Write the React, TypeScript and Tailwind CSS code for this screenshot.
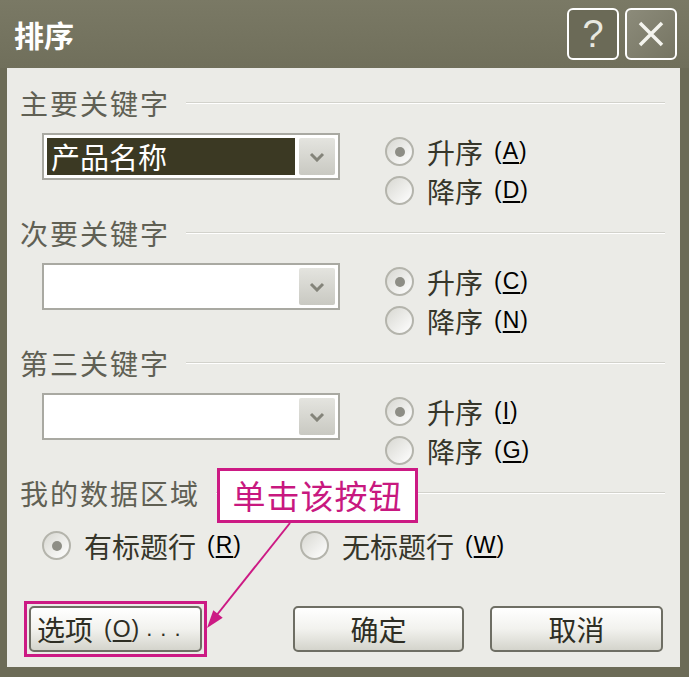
import React from 'react';

const FONT = "font-['Noto_Sans_CJK_SC','Noto_Sans',sans-serif]";

function Hotkey({ k }: { k: string }) {
  return (
    <span className="ml-[11px] font-['Liberation_Sans',sans-serif] text-[23px] tracking-[1px]">
      (<span className="underline underline-offset-[3px]">{k}</span>)
    </span>
  );
}

function Radio({ checked, label, k }: { checked?: boolean; label: string; k: string }) {
  return (
    <div className="flex h-[39px] items-center">
      <div className="flex h-[29px] w-[29px] items-center justify-center rounded-full border-2 border-[#b4b4ac] bg-gradient-to-br from-[#d8d8d2] to-white">
        {checked && <div className="h-[10px] w-[10px] rounded-full bg-[#8e8e86]" />}
      </div>
      <span className="ml-[13px] text-[28px] leading-none text-[#36362a]">{label}</span>
      <Hotkey k={k} />
    </div>
  );
}

function GroupLabel({ text }: { text: string }) {
  return (
    <div className="flex h-[30px] items-center gap-[16px] pr-[15px]">
      <span className="text-[28px] leading-none tracking-[2px] text-[#606054]">{text}</span>
      <div className="h-[2px] flex-1 border-t border-[#d2d2cc] border-b border-b-white" />
    </div>
  );
}

function Combo({ value }: { value?: string }) {
  return (
    <div className="mt-[1px] flex h-[47px] w-[298px] border-2 border-[#a9a9a2] bg-white p-[3px]">
      <div
        className={
          value
            ? 'flex flex-1 items-center bg-[#3b3923] pl-[4px] text-[29px] leading-none text-white'
            : 'flex-1'
        }
      >
        {value}
      </div>
      <div className="ml-[4px] flex w-[36px] items-center justify-center rounded-[2px] bg-gradient-to-b from-[#e4e4df] to-[#c9c9c2]">
        <svg width="16" height="10" viewBox="0 0 16 10">
          <path d="M2 2 L8 8 L14 2" fill="none" stroke="#84847a" strokeWidth="3" />
        </svg>
      </div>
    </div>
  );
}

function SortGroup({ label, value, keys }: { label: string; value?: string; keys: [string, string] }) {
  return (
    <div className="mb-[8px]">
      <GroupLabel text={label} />
      <div className="mt-[14px] flex">
        <div className="ml-[22px]">
          <Combo value={value} />
        </div>
        <div className="ml-[45px] flex flex-col">
          <Radio checked label="升序" k={keys[0]} />
          <Radio label="降序" k={keys[1]} />
        </div>
      </div>
    </div>
  );
}

function Btn({ children, className }: { children: React.ReactNode; className?: string }) {
  return (
    <div
      className={
        'flex h-[46px] items-center rounded-[5px] border-2 border-[#6e6e64] bg-gradient-to-b from-white via-[#f2f2ee] to-[#d4d4cc] text-[28px] leading-none text-[#2e2e24] ' +
        (className || '')
      }
    >
      {children}
    </div>
  );
}

export default function App() {
  return (
    <div className={`relative flex h-[677px] w-[689px] flex-col bg-[#6c6b57] ${FONT}`}>
      {/* title bar */}
      <div className="flex h-[68px] items-center bg-gradient-to-b from-[#7a7965] to-[#706f5b] pl-[14px] pr-[12px]">
        <span className="text-[30px] font-bold leading-none text-white">排序</span>
        <div className="ml-auto flex gap-[6px]">
          <div className="flex h-[52px] w-[52px] items-center justify-center rounded-[6px] border-2 border-white bg-[#6b6a57]">
            <span className="font-['Liberation_Sans',sans-serif] text-[38px] leading-none text-[#e8e8e0]">?</span>
          </div>
          <div className="flex h-[52px] w-[52px] items-center justify-center rounded-[6px] border-2 border-white bg-gradient-to-br from-[#8c8b7a] to-[#767563]">
            <svg width="30" height="30" viewBox="0 0 30 30">
              <path d="M4 4 L26 26 M26 4 L4 26" stroke="#f4f4ee" strokeWidth="3.5" />
            </svg>
          </div>
        </div>
      </div>

      {/* body */}
      <div className="mb-[10px] ml-[7px] mr-[9px] flex-1 bg-[#ebebe7] pl-[13px] pt-[20px]">
        <SortGroup label="主要关键字" value="产品名称" keys={['A', 'D']} />
        <SortGroup label="次要关键字" keys={['C', 'N']} />
        <SortGroup label="第三关键字" keys={['I', 'G']} />

        <GroupLabel text="我的数据区域" />
        <div className="ml-[22px] mt-[18px] flex">
          <div className="w-[258px]">
            <Radio checked label="有标题行" k="R" />
          </div>
          <Radio label="无标题行" k="W" />
        </div>

        <div className="ml-[4px] mt-[36px] flex items-start">
          <div className="border-[3px] border-[#cc1a84] p-[2px]">
            <Btn className="w-[173px] pl-[6px]">
              选项
              <Hotkey k="O" />
              <span className="ml-[6px] font-['Liberation_Sans',sans-serif] text-[22px] tracking-[8px]">...</span>
            </Btn>
          </div>
          <Btn className="ml-[86px] mt-[5px] w-[171px] justify-center">确定</Btn>
          <Btn className="ml-[26px] mt-[5px] w-[173px] justify-center">取消</Btn>
        </div>
      </div>

      {/* callout */}
      <div className="absolute left-[217px] top-[468px] flex h-[55px] w-[201px] items-center justify-center border-[3px] border-[#cc1a84] bg-white">
        <span className="text-[33px] leading-none tracking-[1px] text-[#c8187f]">单击该按钮</span>
      </div>
      <svg className="pointer-events-none absolute left-0 top-0" width="689" height="677">
        <line x1="290" y1="523" x2="216" y2="616" stroke="#cc1a84" strokeWidth="2" />
        <polygon points="207,628 222.7,617.7 213.3,610.3" fill="#cc1a84" />
      </svg>
    </div>
  );
}
